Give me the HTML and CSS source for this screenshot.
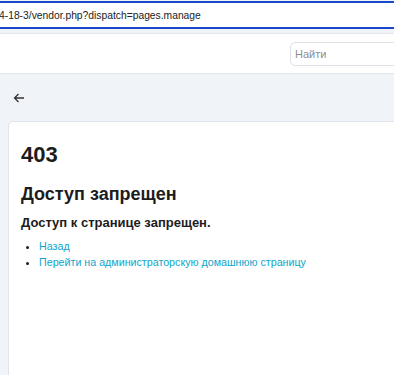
FILE: index.html
```html
<!DOCTYPE html>
<html lang="ru">
<head>
  <meta charset="UTF-8">
  <meta name="viewport" content="width=device-width, initial-scale=1.0">
  <title>Доступ запрещен</title>
  <link rel="stylesheet" href="styles.css">
</head>
<body>

  <!-- address bar -->
  <div class="url-bar">
    <div class="url-text">4-18-3/vendor.php?dispatch=pages.manage</div>
  </div>

  <header class="top-header">
    <input class="search" type="text" placeholder="Найти">
  </header>

  <main class="page">
    <div class="toolbar">
      <svg class="back" width="12" height="12" viewBox="0 0 12 12">
        <path d="M11 6H1.5M5.5 2L1.5 6l4 4" fill="none" stroke="#333" stroke-width="1.3"/>
      </svg>
    </div>

    <div class="card">
      <h1>403</h1>
      <h2>Доступ запрещен</h2>
      <h3>Доступ к странице запрещен.</h3>
      <ul class="links">
        <li><a href="#">Назад</a></li>
        <li><a href="#">Перейти на администраторскую домашнюю страницу</a></li>
      </ul>
    </div>
  </main>

</body>
</html>
```

FILE: styles.css
```css
body {
  margin: 0;
  font-family: "Liberation Sans", "DejaVu Sans", sans-serif;
  background-color: #f0f3f8;
  height: 375px;
  overflow: hidden;
}
.url-bar {
  background-color: #fff;
  border-top: 2px solid #1a47c9;
  border-bottom: 2px solid #1a47c9;
  margin-top: 1px;
  height: 24px;
  display: flex;
  align-items: center;
}
.url-text {
  font-size: 10.3px;
  color: #222;
  margin-left: -1px;
}
.top-header {
  margin-top: 4px;
  border-top: 1px solid #e3e6ea;
  border-bottom: 1px solid #e3e6ea;
  background-color: #fff;
  height: 39px;
  display: flex;
  justify-content: flex-end;
  align-items: center;
  overflow: hidden;
}
.search {
  width: 130px;
  height: 24px;
  box-sizing: border-box;
  margin-right: -26px;
  border: 1px solid #dde2e8;
  border-radius: 5px;
  padding: 0 4px;
  font-family: inherit;
  font-size: 11px;
}
.search::placeholder {
  color: #8a8f96;
}
.toolbar {
  height: 47px;
  padding-left: 13px;
  display: flex;
  align-items: center;
}
.back {
  display: block;
}
.card {
  background-color: #fff;
  border: 1px solid #dfe4ea;
  border-radius: 5px;
  margin-left: 8px;
  margin-right: -20px;
  padding: 18px 12px 120px;
  color: #1c1c1c;
}
h1 {
  font-size: 22px;
  font-weight: 700;
  margin: 0 0 12px;
  line-height: 30px;
}
h2 {
  font-size: 18px;
  font-weight: 700;
  margin: 0 0 7px;
  line-height: 24px;
}
h3 {
  font-size: 13px;
  font-weight: 700;
  margin: 0 0 5px;
  line-height: 20px;
}
.links {
  margin: 0;
  padding-left: 18px;
  font-size: 10.7px;
  line-height: 16px;
}
.links a {
  color: #0ea5c9;
  text-decoration: none;
}
```
